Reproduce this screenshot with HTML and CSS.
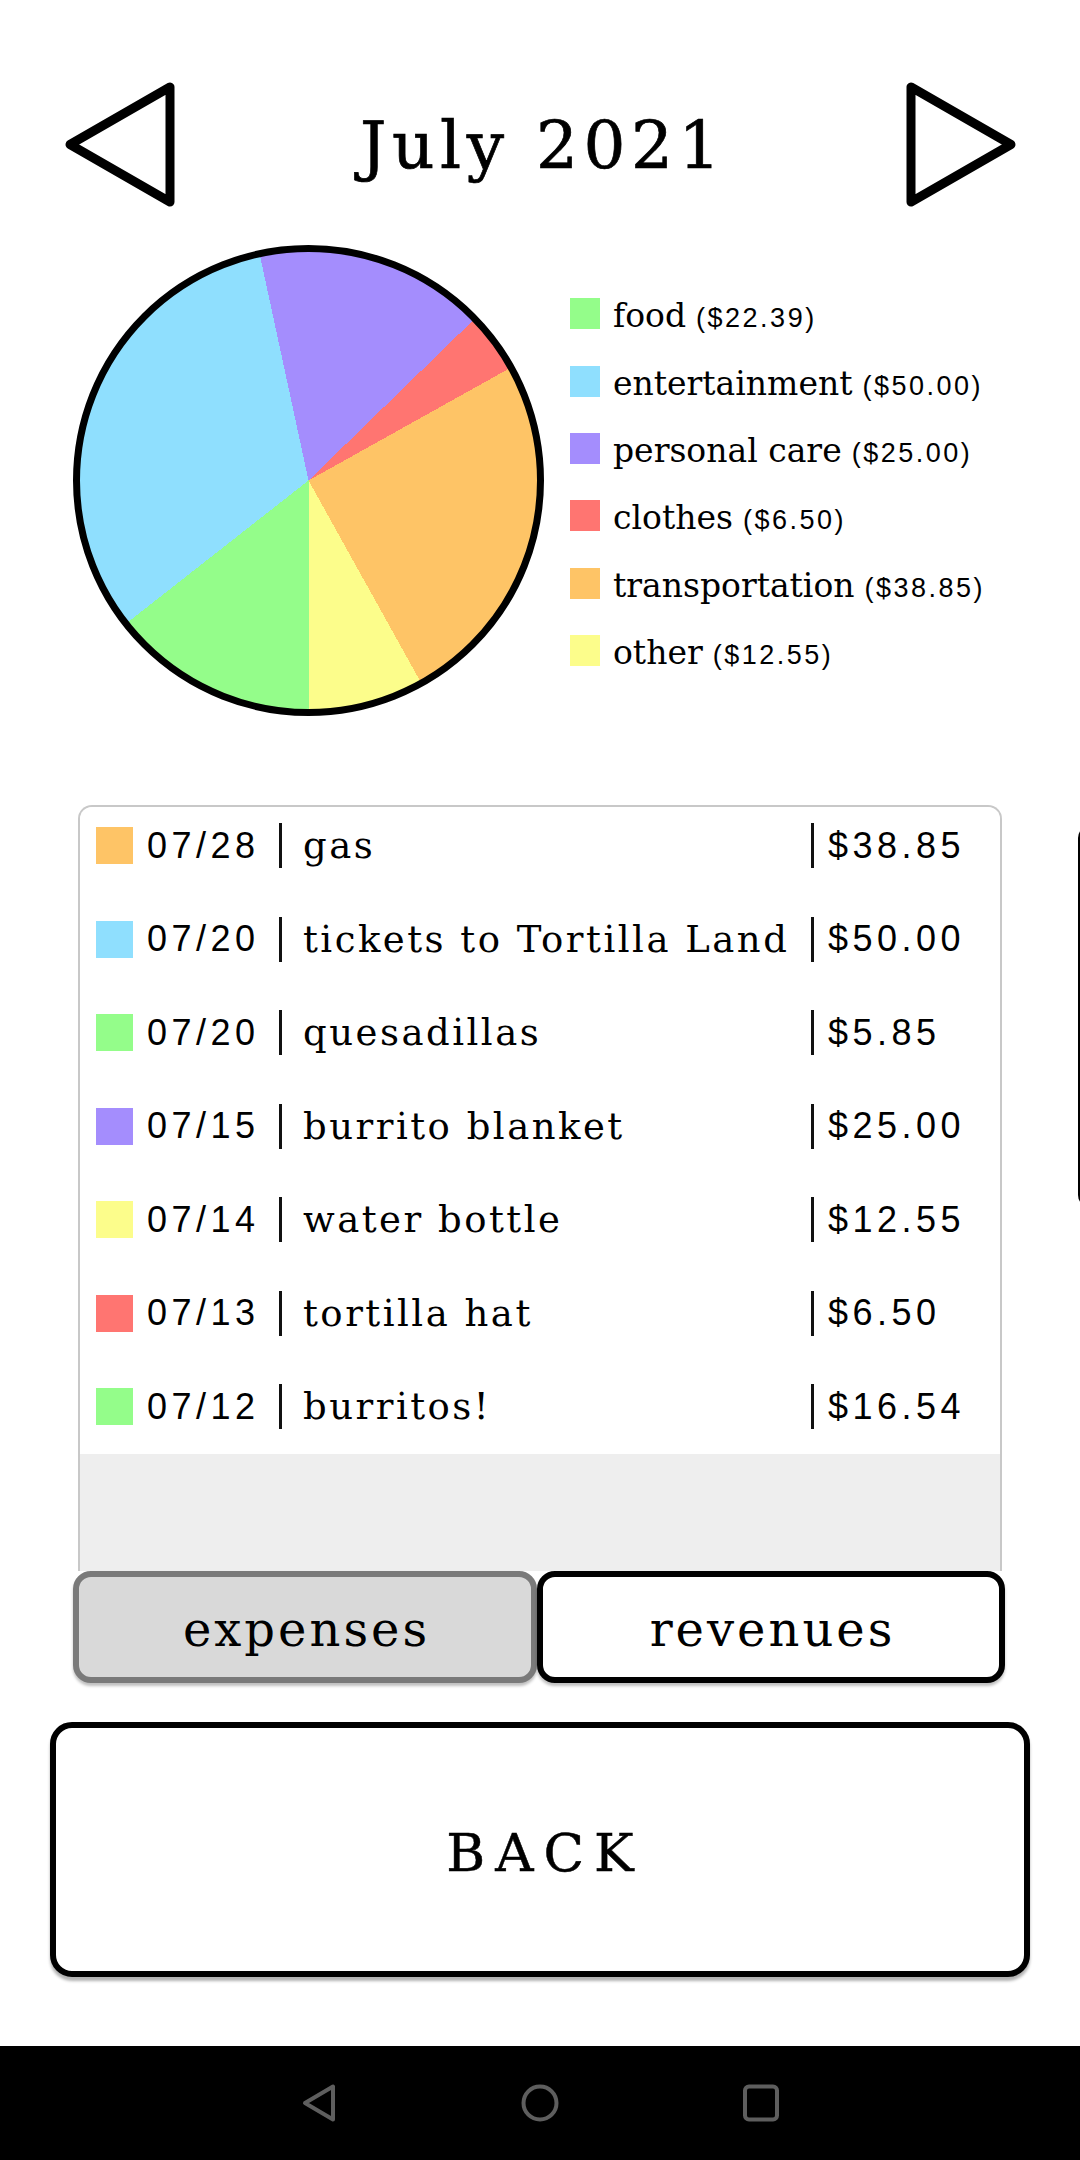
FILE: index.html
```html
<!DOCTYPE html>
<html lang="en">
<head>
<meta charset="utf-8">
<title>July 2021</title>
<link rel="stylesheet" href="styles.css">
</head>
<body>
<div class="screen">
  <header class="month-bar">
    <svg class="arrow" viewBox="0 0 120 130" aria-label="previous month"><path d="M10 64.5 L110 7 L110 122 Z"/></svg>
    <h1 class="month">July 2021</h1>
    <svg class="arrow" viewBox="0 0 120 130" aria-label="next month"><path d="M110 64.5 L10 7 L10 122 Z"/></svg>
  </header>

  <section class="summary">
    <div class="pie"></div>
    <ul class="legend">
      <li><span class="sw c-food"></span><span class="lg-text">food<span class="lg-amt"> ($22.39)</span></span></li>
      <li><span class="sw c-ent"></span><span class="lg-text">entertainment<span class="lg-amt"> ($50.00)</span></span></li>
      <li><span class="sw c-care"></span><span class="lg-text">personal care<span class="lg-amt"> ($25.00)</span></span></li>
      <li><span class="sw c-clothes"></span><span class="lg-text">clothes<span class="lg-amt"> ($6.50)</span></span></li>
      <li><span class="sw c-trans"></span><span class="lg-text">transportation<span class="lg-amt"> ($38.85)</span></span></li>
      <li><span class="sw c-other"></span><span class="lg-text">other<span class="lg-amt"> ($12.55)</span></span></li>
    </ul>
  </section>

  <section class="ledger">
    <div class="ledger-box">
      <div class="ledger-rows">
        <div class="row"><span class="rsw c-trans"></span><span class="date">07/28</span><span class="sep"></span><span class="desc">gas</span><span class="sep"></span><span class="amt">$38.85</span></div>
        <div class="row"><span class="rsw c-ent"></span><span class="date">07/20</span><span class="sep"></span><span class="desc">tickets to Tortilla Land</span><span class="sep"></span><span class="amt">$50.00</span></div>
        <div class="row"><span class="rsw c-food"></span><span class="date">07/20</span><span class="sep"></span><span class="desc">quesadillas</span><span class="sep"></span><span class="amt">$5.85</span></div>
        <div class="row"><span class="rsw c-care"></span><span class="date">07/15</span><span class="sep"></span><span class="desc">burrito blanket</span><span class="sep"></span><span class="amt">$25.00</span></div>
        <div class="row"><span class="rsw c-other"></span><span class="date">07/14</span><span class="sep"></span><span class="desc">water bottle</span><span class="sep"></span><span class="amt">$12.55</span></div>
        <div class="row"><span class="rsw c-clothes"></span><span class="date">07/13</span><span class="sep"></span><span class="desc">tortilla hat</span><span class="sep"></span><span class="amt">$6.50</span></div>
        <div class="row"><span class="rsw c-food"></span><span class="date">07/12</span><span class="sep"></span><span class="desc">burritos!</span><span class="sep"></span><span class="amt">$16.54</span></div>
      </div>
    </div>
    <div class="tabs">
      <button class="tab tab-on">expenses</button>
      <button class="tab tab-off">revenues</button>
    </div>
  </section>

  <button class="back">BACK</button>

  <div class="edge-card"></div>

  <nav class="sysnav">
    <svg class="nav-ico" viewBox="0 0 40 40"><path d="M6 20 L34 3.5 L34 36.5 Z"/></svg>
    <svg class="nav-ico nav-home" viewBox="0 0 40 40"><circle cx="20" cy="20" r="16.5"/></svg>
    <svg class="nav-ico" viewBox="0 0 40 40"><rect x="4" y="3.5" width="32" height="33" rx="4"/></svg>
  </nav>
</div>
</body>
</html>
```

FILE: styles.css
```css
* { box-sizing: border-box; }

html, body {
  margin: 0;
  padding: 0;
  background: #fff;
}

body {
  width: 1080px;
  height: 2160px;
  overflow: hidden;
  font-family: "DejaVu Serif", "Liberation Serif", serif;
  color: #000;
}

.screen {
  position: relative;
  width: 1080px;
  height: 2160px;
  display: flex;
  flex-direction: column;
  overflow: hidden;
}

/* colours */
.c-food { background: #94fd8a; }
.c-ent { background: #8fdffe; }
.c-care { background: #a48dfd; }
.c-clothes { background: #ff7571; }
.c-trans { background: #fec466; }
.c-other { background: #fcfd8b; }

/* header */
.month-bar {
  display: flex;
  align-items: center;
  justify-content: space-between;
  padding: 80px 59px 0 60px;
}

.arrow {
  width: 120px;
  height: 130px;
  display: block;
  flex: none;
}

.arrow path {
  fill: none;
  stroke: #000;
  stroke-width: 9;
  stroke-linejoin: round;
}

.month {
  margin: 2px 0 0;
  padding-left: 5px;
  font-size: 66px;
  font-weight: normal;
  letter-spacing: 5.5px;
  line-height: 1;
  -webkit-text-stroke: 0.7px #000;
}

/* pie + legend */
.summary {
  display: flex;
  align-items: flex-start;
  margin-top: 35px;
  padding-left: 73px;
}

.pie {
  width: 471px;
  height: 471px;
  flex: none;
  border-radius: 50%;
  border: 7px solid #000;
  background: conic-gradient(from 180deg,
    #94fd8a 0 51.9deg,
    #8fdffe 0 167.82deg,
    #a48dfd 0 225.77deg,
    #ff7571 0 240.84deg,
    #fec466 0 330.9deg,
    #fcfd8b 0 360deg);
}

.legend {
  list-style: none;
  margin: 35px 0 0 26px;
  padding: 0;
}

.legend li {
  height: 67.4px;
  display: flex;
  align-items: center;
}

.sw {
  width: 30px;
  height: 31px;
  flex: none;
  margin-right: 13px;
}

.lg-text {
  font-size: 33px;
  line-height: 1;
  white-space: nowrap;
  padding-top: 4px;
}

.lg-amt {
  font-family: "Liberation Sans", Arial, sans-serif;
  font-size: 27px;
  letter-spacing: 2.5px;
}

/* ledger */
.ledger {
  margin: 89px 0 0 73px;
  width: 932px;
}

.ledger-box {
  margin: 0 3px 0 5px;
  height: 766px;
  border: 2px solid #c8c8c8;
  border-bottom: 0;
  border-radius: 14px 14px 0 0;
  background: #eeeeee;
  overflow: hidden;
}

.ledger-rows {
  margin-top: -8px;
  background: #fff;
}

.row {
  height: 93.5px;
  display: flex;
  align-items: center;
  padding-left: 16px;
}

.rsw {
  width: 37px;
  height: 37px;
  flex: none;
  margin-right: 14px;
}

.date,
.amt {
  font-family: "Liberation Sans", Arial, sans-serif;
  font-size: 36px;
  letter-spacing: 4.5px;
  line-height: 1;
}

.date {
  width: 132px;
  flex: none;
}

.sep {
  width: 3px;
  height: 45px;
  flex: none;
  background: #111;
}

.desc {
  width: 529px;
  flex: none;
  padding: 0 0 0 21px;
  font-size: 37px;
  letter-spacing: 2.5px;
  line-height: 1;
  white-space: nowrap;
}

.amt {
  padding-left: 14px;
}

/* tabs */
.tabs {
  display: flex;
}

.tab {
  margin: 0;
  height: 112px;
  padding: 3px 0 0 3px;
  font-family: "DejaVu Serif", "Liberation Serif", serif;
  font-size: 48px;
  letter-spacing: 3px;
  line-height: 1;
  color: #000;
  border-radius: 18px;
  box-shadow: 0 3px 3px rgba(0, 0, 0, 0.25);
}

.tab-on {
  width: 464px;
  background: #d9d9d9;
  border: 6px solid #7a7a7a;
}

.tab-off {
  width: 468px;
  background: #fff;
  border: 6px solid #000;
}

/* back button */
.back {
  margin: 39px 0 0 50px;
  width: 980px;
  height: 255px;
  padding: 5px 0 0 10px;
  border: 6px solid #000;
  border-radius: 22px;
  background: #fff;
  color: #000;
  font-family: "DejaVu Serif", "Liberation Serif", serif;
  font-size: 53px;
  letter-spacing: 10px;
  line-height: 1;
  -webkit-text-stroke: 0.5px #000;
  box-shadow: 0 4px 3px rgba(0, 0, 0, 0.3);
}

/* neighbouring card peeking in from the right */
.edge-card {
  position: absolute;
  left: 1078px;
  top: 826px;
  width: 40px;
  height: 381px;
  border: 3px solid #000;
  border-radius: 12px;
}

/* system navigation */
.sysnav {
  margin-top: auto;
  height: 114px;
  background: #000;
  display: flex;
  justify-content: center;
  align-items: center;
  gap: 181px;
}

.nav-ico {
  width: 40px;
  height: 40px;
  display: block;
}

.nav-ico path,
.nav-ico circle,
.nav-ico rect {
  fill: none;
  stroke: #5e5e5e;
  stroke-width: 4;
  stroke-linejoin: round;
}
```
